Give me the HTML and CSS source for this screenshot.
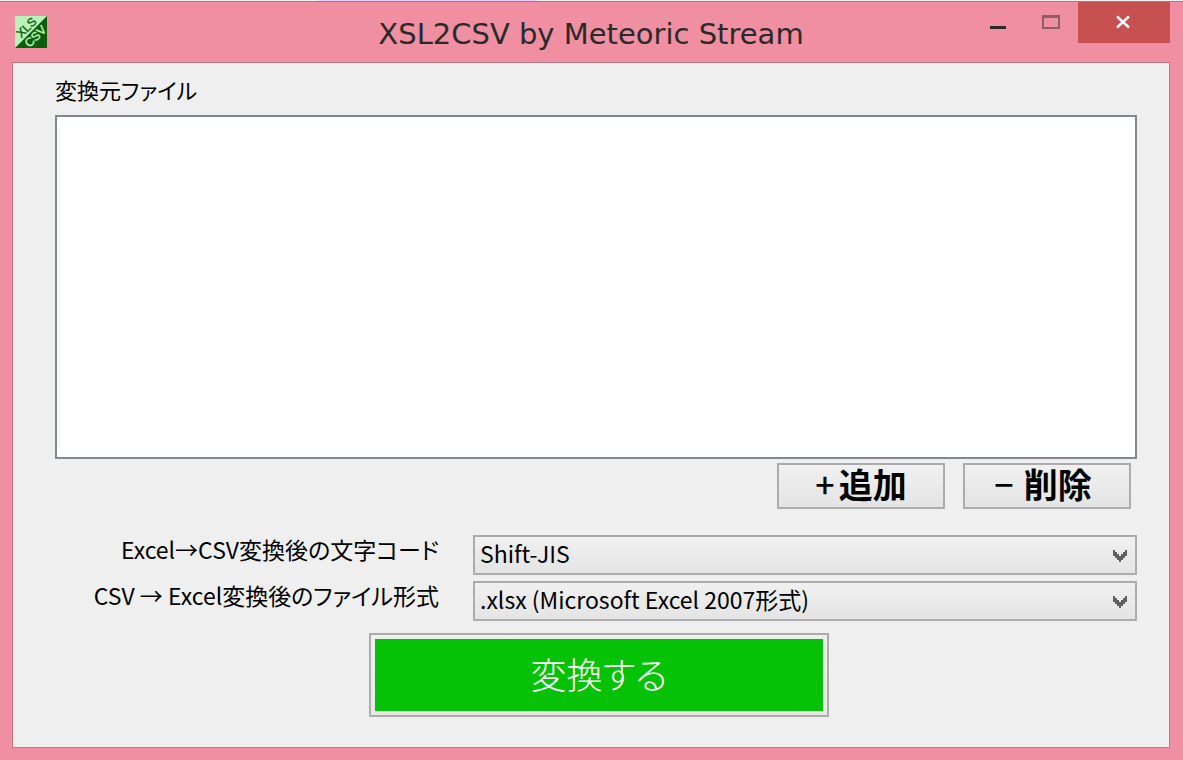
FILE: index.html
```html
<!DOCTYPE html>
<html lang="ja">
<head>
<meta charset="utf-8">
<title>XSL2CSV by Meteoric Stream</title>
<link rel="stylesheet" href="styles.css">
</head>
<body>
<div class="window">
  <header class="titlebar">
    <svg class="app-icon" viewBox="0 0 32 32" aria-hidden="true">
      <path d="M0 0H32V32H0z" fill="#baf2ba"/>
      <path d="M32 0V32H0z" fill="#0a5f0a"/>
      <text class="icon-text" transform="translate(11.500 11.500) rotate(-45)" y="4" fill="#0a5f0a" stroke="#0a5f0a">XLS</text>
      <text class="icon-text" transform="translate(20.500 20.500) rotate(-45)" y="4" fill="#baf2ba" stroke="#baf2ba">CSV</text>
    </svg>
    <h1 class="title">XSL2CSV by Meteoric Stream</h1>
    <div class="controls">
      <button class="control" type="button" aria-label="最小化">
        <svg width="54" height="41" shape-rendering="crispEdges"><path d="M20 24H36V27H20z" fill="#2a2a2a"/></svg>
      </button>
      <button class="control" type="button" aria-label="最大化">
        <svg width="54" height="41" shape-rendering="crispEdges"><path fill-rule="evenodd" d="M18 13H36V27H18zM20 16V25H34V16z" fill="#8e5d66"/></svg>
      </button>
      <button class="control close" type="button" aria-label="閉じる">
        <svg width="92" height="41"><path d="M39 14.500L51 25.500M51 14.500L39 25.500" stroke="#fff" stroke-width="2.400"/></svg>
      </button>
    </div>
  </header>
  <main class="client">
    <label class="list-label" for="files">変換元ファイル</label>
    <select class="file-list" id="files" size="12" multiple></select>
    <div class="list-actions">
      <button class="button" type="button"><span class="sign">+</span><span>追加</span></button>
      <button class="button remove" type="button"><span class="sign">−</span><span>削除</span></button>
    </div>
    <div class="options">
      <label class="option-label" for="encoding">Excel→CSV変換後の文字コード</label>
      <div class="combo">
        <select class="combo-input" id="encoding"><option>Shift-JIS</option></select>
        <svg class="arrow" viewBox="0 0 14 12" aria-hidden="true"><path d="M0 0H2V2H4V4H6V6H8V4H10V2H12V0H14V6H12V8H10V10H8V12H6V10H4V8H2V6H0z" fill="#606060"/></svg>
      </div>
      <label class="option-label" for="format">CSV → Excel変換後のファイル形式</label>
      <div class="combo">
        <select class="combo-input" id="format"><option>.xlsx (Microsoft Excel 2007形式)</option></select>
        <svg class="arrow" viewBox="0 0 14 12" aria-hidden="true"><path d="M0 0H2V2H4V4H6V6H8V4H10V2H12V0H14V6H12V8H10V10H8V12H6V10H4V8H2V6H0z" fill="#606060"/></svg>
      </div>
    </div>
    <div class="submit-row">
      <button class="convert" type="button"><span class="convert-face">変換する</span></button>
    </div>
  </main>
</div>
</body>
</html>
```
FILE: styles.css
```css
* { box-sizing: border-box; }

body {
  margin: 0;
  font-family: "Noto Sans CJK JP", sans-serif;
  font-size: 23px;
  line-height: 28px;
  font-feature-settings: "palt";
  color: #000;
}

button, select { font: inherit; font-feature-settings: inherit; color: inherit; border-radius: 0; margin: 0; }

.window {
  display: flex;
  flex-direction: column;
  min-height: 100vh;
  padding: 0 13px 12px 12px;
  background: linear-gradient(90deg, #f0f0f0 318px, #e8cdf8 318px 537px, #f0f0f0 537px) top / 100% 1px no-repeat,
    linear-gradient(#b07480, #b07480) 0 1px / 100% 1px no-repeat,
    #f08ea2;
}

.titlebar {
  display: grid;
  grid-template-columns: 1fr auto 1fr;
  align-items: start;
  height: 62px;
  padding-top: 2px;
}

.app-icon { width: 32px; height: 32px; margin: 14px 0 0 3px; overflow: visible; }
.icon-text { font: 400 12px/12px "Liberation Sans", sans-serif; text-anchor: middle; stroke-width: 0.4; }

.title {
  margin: 8px 0 0;
  font: 400 29px/48px "DejaVu Sans", sans-serif;
  color: #2a2a2a;
}

.controls { display: flex; justify-content: flex-end; }
.control { padding: 0; border: 0; background: none; height: 41px; }
.control svg { display: block; }
.close { background: #c75050; }

.client {
  flex: 1;
  display: flex;
  flex-direction: column;
  padding: 7px 32px 30px 42px;
  border: 1px solid #c97585;
  background: #efefef;
}

.list-label {
  align-self: flex-start;
  padding-bottom: 7px;
  font-size: 22px;
  line-height: 38px;
}

.file-list {
  flex: 1 1 0;
  width: 100%;
  min-height: 160px;
  border: 2px solid #828790;
  background: #fff;
}

.list-actions {
  display: flex;
  justify-content: flex-end;
  gap: 18px;
  padding: 4px 6px 26px 0;
}

.button {
  display: flex;
  align-items: center;
  justify-content: center;
  gap: 4px;
  width: 168px;
  height: 46px;
  padding: 0 0 4px;
  border: 2px solid #acacac;
  background: linear-gradient(#f0f0f0, #e4e4e4);
  font-size: 34px;
  font-weight: 700;
  line-height: 40px;
}

.sign { font-weight: 500; }
.remove { gap: 10px; padding-right: 8px; }

.options {
  display: grid;
  grid-template-columns: 384px 1fr;
  gap: 6px 34px;
}

.option-label { text-align: right; white-space: nowrap; }

.combo { display: grid; align-items: center; }

.combo-input {
  grid-area: 1 / 1;
  width: 100%;
  height: 40px;
  padding: 0 40px 4px 5px;
  border: 2px solid #acacac;
  background: linear-gradient(#f0f0f0, #e4e4e4);
  appearance: none;
}

.arrow {
  grid-area: 1 / 1;
  justify-self: end;
  width: 14px;
  height: 12px;
  margin: 2px 10px 0 0;
  pointer-events: none;
}

.submit-row { display: flex; justify-content: center; padding: 12px 0 0 6px; }

.convert {
  width: 460px;
  padding: 4px;
  border: 2px solid #acacac;
  background: linear-gradient(#f0f0f0, #e8e8e8);
}

.convert-face {
  display: block;
  padding-bottom: 4px;
  background: #06c206;
  color: #fff;
  font-size: 36px;
  font-weight: 300;
  line-height: 68px;
}
```
